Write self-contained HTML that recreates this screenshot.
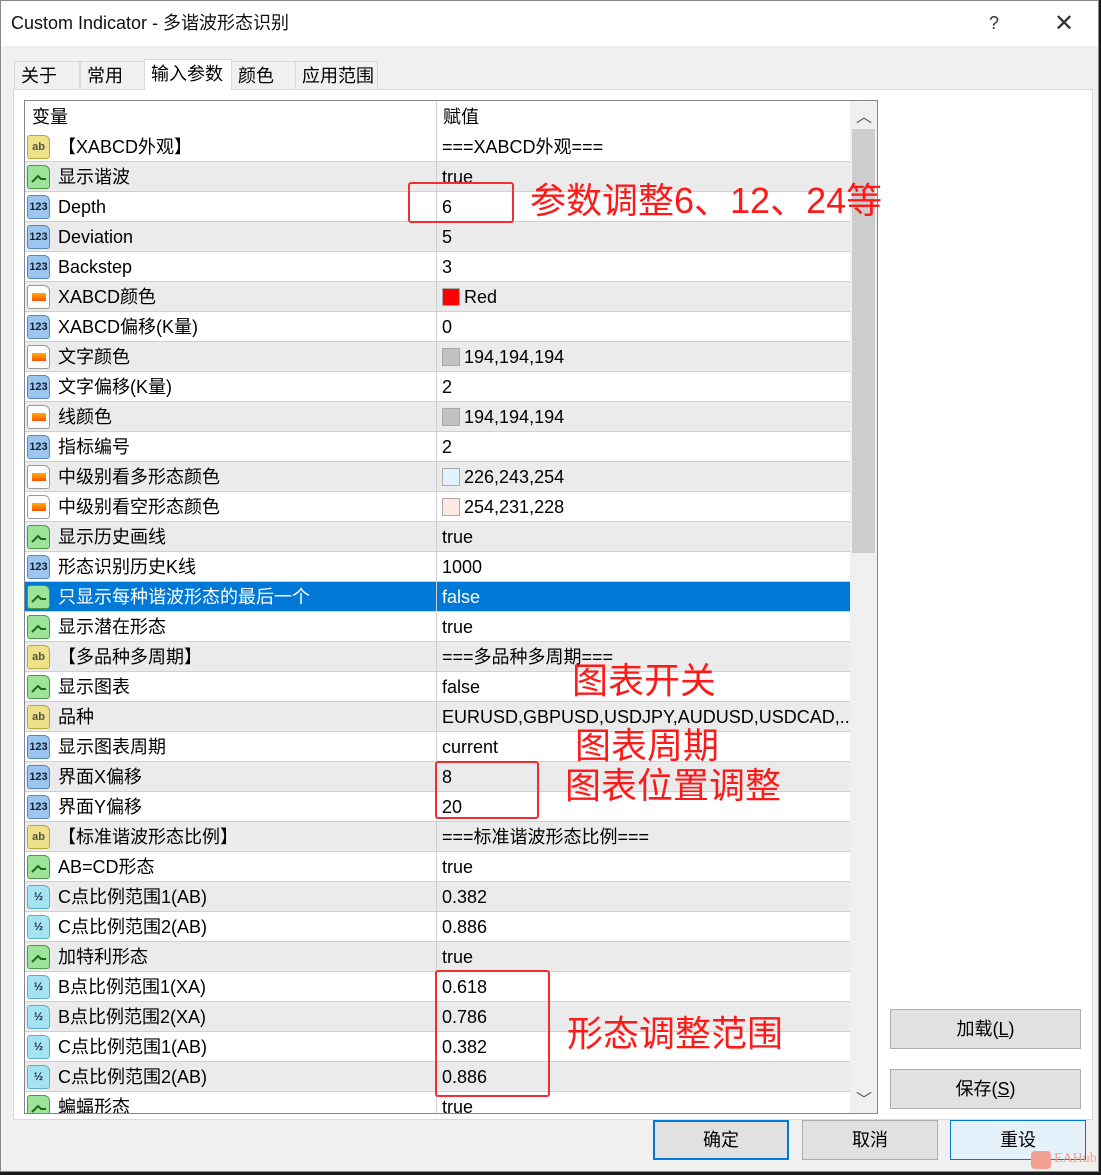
<!DOCTYPE html>
<html><head><meta charset="utf-8"><style>
*{margin:0;padding:0;box-sizing:border-box}
body{width:1101px;height:1175px;position:relative;background:#1a1a1a;font-family:"Liberation Sans","Noto Sans CJK SC",sans-serif;overflow:hidden}
.win{position:absolute;left:0;top:0;width:1099px;height:1172px;background:#f0f0f0;border:1px solid #888}
.title{position:absolute;left:0;top:0;width:1097px;height:45px;background:#fff;font-size:18px;color:#111;line-height:45px;padding-left:10px}
.tab{position:absolute;top:60px;height:29px;background:#f0f0f0;border:1px solid #d9d9d9;border-bottom:none;font-size:18px;line-height:28px;padding-left:6px;color:#000}
.panel{position:absolute;left:12px;top:88px;width:1080px;height:1031px;background:#fff;border:1px solid #d9d9d9}
.list{position:absolute;left:23px;top:99px;width:854px;height:1014px;border:1px solid #828790;background:#fff;overflow:hidden}
.hdr{position:absolute;left:0;top:0;width:825px;height:31px;background:#fff;font-size:18px;line-height:32px}
.row{position:absolute;left:0;width:825px;height:30px;border-bottom:1px solid #d0d0d0;font-size:18px;line-height:30px;color:#000}
.g{background:#ebebeb}
.sel{background:#0078d7;color:#fff}
.n{position:absolute;left:33px;top:0;white-space:nowrap}
.v{position:absolute;left:417px;top:0;white-space:nowrap}
.col{position:absolute;left:411px;top:0;width:1px;height:1014px;background:#d0d0d0}
.ic{position:absolute;left:2px;top:3px;width:23px;height:24px;border-radius:3px 6px 3px 3px;font-size:11px;font-weight:bold;font-style:normal;line-height:22px;text-align:center;overflow:hidden}
.ab{background:#efe08a;border:1px solid #b8a840;color:#554}
.b{background:#9de39a;border:1px solid #4a9a4a}
.b svg{position:absolute;left:2px;top:3px}
.nm{background:#9cc5ef;border:1px solid #5a86b8;color:#123}
.c{background:#fff;border:1px solid #999}
.c:after{content:"";position:absolute;left:4px;top:7px;width:14px;height:8px;background:linear-gradient(#ffb000,#ff5000)}
.d{background:#a6e3f2;border:1px solid #5ab0c8;color:#124}
.sw{display:inline-block;width:18px;height:18px;vertical-align:-3px;margin-right:4px;border:1px solid #aaa}
.sb{position:absolute;left:825px;top:0;width:27px;height:1012px;background:#f0f0f0}
.thumb{position:absolute;left:2px;top:28px;width:23px;height:424px;background:#cdcdcd}
.btn{position:absolute;height:40px;background:#e1e1e1;border:1px solid #adadad;font-size:18px;text-align:center;line-height:38px;color:#000}
.red{position:absolute;border:2px solid #f03030;border-radius:3px}
.ann{position:absolute;color:#ff1a1a;font-size:36px;white-space:nowrap;line-height:40px}
</style></head><body>
<div class="win">
<div class="title">Custom Indicator - 多谐波形态识别<span style="position:absolute;left:988px;color:#333">?</span><span style="position:absolute;left:1053px;font-size:24px;color:#333">✕</span></div>
<div class="tab" style="left:13px;width:66px">关于</div>
<div class="tab" style="left:79px;width:65px">常用</div>
<div class="tab" style="left:143px;width:88px;top:58px;height:31px;background:#fff;z-index:2">输入参数</div>
<div class="tab" style="left:230px;width:65px">颜色</div>
<div class="tab" style="left:294px;width:83px">应用范围</div>
<div class="panel"></div>
<div class="list">
<div class="hdr"><span style="position:absolute;left:7px">变量</span><span style="position:absolute;left:418px">赋值</span></div>
<div class="row" style="top:31px"><i class="ic ab">ab</i><span class="n">【XABCD外观】</span><span class="v">===XABCD外观===</span></div>
<div class="row g" style="top:61px"><i class="ic b"><svg width="18" height="16"><path d="M2 13 L8 7 L11 10 L16 10" stroke="#1a6a1a" stroke-width="2" fill="none"/></svg></i><span class="n">显示谐波</span><span class="v">true</span></div>
<div class="row" style="top:91px"><i class="ic nm">123</i><span class="n">Depth</span><span class="v">6</span></div>
<div class="row g" style="top:121px"><i class="ic nm">123</i><span class="n">Deviation</span><span class="v">5</span></div>
<div class="row" style="top:151px"><i class="ic nm">123</i><span class="n">Backstep</span><span class="v">3</span></div>
<div class="row g" style="top:181px"><i class="ic c"></i><span class="n">XABCD颜色</span><span class="v"><span class="sw" style="background:#f00"></span>Red</span></div>
<div class="row" style="top:211px"><i class="ic nm">123</i><span class="n">XABCD偏移(K量)</span><span class="v">0</span></div>
<div class="row g" style="top:241px"><i class="ic c"></i><span class="n">文字颜色</span><span class="v"><span class="sw" style="background:#c2c2c2"></span>194,194,194</span></div>
<div class="row" style="top:271px"><i class="ic nm">123</i><span class="n">文字偏移(K量)</span><span class="v">2</span></div>
<div class="row g" style="top:301px"><i class="ic c"></i><span class="n">线颜色</span><span class="v"><span class="sw" style="background:#c2c2c2"></span>194,194,194</span></div>
<div class="row" style="top:331px"><i class="ic nm">123</i><span class="n">指标编号</span><span class="v">2</span></div>
<div class="row g" style="top:361px"><i class="ic c"></i><span class="n">中级别看多形态颜色</span><span class="v"><span class="sw" style="background:#e2f3fe"></span>226,243,254</span></div>
<div class="row" style="top:391px"><i class="ic c"></i><span class="n">中级别看空形态颜色</span><span class="v"><span class="sw" style="background:#fee7e4"></span>254,231,228</span></div>
<div class="row g" style="top:421px"><i class="ic b"><svg width="18" height="16"><path d="M2 13 L8 7 L11 10 L16 10" stroke="#1a6a1a" stroke-width="2" fill="none"/></svg></i><span class="n">显示历史画线</span><span class="v">true</span></div>
<div class="row" style="top:451px"><i class="ic nm">123</i><span class="n">形态识别历史K线</span><span class="v">1000</span></div>
<div class="row sel" style="top:481px"><i class="ic b"><svg width="18" height="16"><path d="M2 13 L8 7 L11 10 L16 10" stroke="#1a6a1a" stroke-width="2" fill="none"/></svg></i><span class="n">只显示每种谐波形态的最后一个</span><span class="v">false</span></div>
<div class="row" style="top:511px"><i class="ic b"><svg width="18" height="16"><path d="M2 13 L8 7 L11 10 L16 10" stroke="#1a6a1a" stroke-width="2" fill="none"/></svg></i><span class="n">显示潜在形态</span><span class="v">true</span></div>
<div class="row g" style="top:541px"><i class="ic ab">ab</i><span class="n">【多品种多周期】</span><span class="v">===多品种多周期===</span></div>
<div class="row" style="top:571px"><i class="ic b"><svg width="18" height="16"><path d="M2 13 L8 7 L11 10 L16 10" stroke="#1a6a1a" stroke-width="2" fill="none"/></svg></i><span class="n">显示图表</span><span class="v">false</span></div>
<div class="row g" style="top:601px"><i class="ic ab">ab</i><span class="n">品种</span><span class="v">EURUSD,GBPUSD,USDJPY,AUDUSD,USDCAD,...</span></div>
<div class="row" style="top:631px"><i class="ic nm">123</i><span class="n">显示图表周期</span><span class="v">current</span></div>
<div class="row g" style="top:661px"><i class="ic nm">123</i><span class="n">界面X偏移</span><span class="v">8</span></div>
<div class="row" style="top:691px"><i class="ic nm">123</i><span class="n">界面Y偏移</span><span class="v">20</span></div>
<div class="row g" style="top:721px"><i class="ic ab">ab</i><span class="n">【标准谐波形态比例】</span><span class="v">===标准谐波形态比例===</span></div>
<div class="row" style="top:751px"><i class="ic b"><svg width="18" height="16"><path d="M2 13 L8 7 L11 10 L16 10" stroke="#1a6a1a" stroke-width="2" fill="none"/></svg></i><span class="n">AB=CD形态</span><span class="v">true</span></div>
<div class="row g" style="top:781px"><i class="ic d">½</i><span class="n">C点比例范围1(AB)</span><span class="v">0.382</span></div>
<div class="row" style="top:811px"><i class="ic d">½</i><span class="n">C点比例范围2(AB)</span><span class="v">0.886</span></div>
<div class="row g" style="top:841px"><i class="ic b"><svg width="18" height="16"><path d="M2 13 L8 7 L11 10 L16 10" stroke="#1a6a1a" stroke-width="2" fill="none"/></svg></i><span class="n">加特利形态</span><span class="v">true</span></div>
<div class="row" style="top:871px"><i class="ic d">½</i><span class="n">B点比例范围1(XA)</span><span class="v">0.618</span></div>
<div class="row g" style="top:901px"><i class="ic d">½</i><span class="n">B点比例范围2(XA)</span><span class="v">0.786</span></div>
<div class="row" style="top:931px"><i class="ic d">½</i><span class="n">C点比例范围1(AB)</span><span class="v">0.382</span></div>
<div class="row g" style="top:961px"><i class="ic d">½</i><span class="n">C点比例范围2(AB)</span><span class="v">0.886</span></div>
<div class="row" style="top:991px"><i class="ic b"><svg width="18" height="16"><path d="M2 13 L8 7 L11 10 L16 10" stroke="#1a6a1a" stroke-width="2" fill="none"/></svg></i><span class="n">蝙蝠形态</span><span class="v">true</span></div>
<div class="col"></div>
<div class="sb"><div class="thumb"></div><span style="position:absolute;left:6px;top:2px;font-size:16px;color:#555">︿</span><span style="position:absolute;left:6px;top:985px;font-size:16px;color:#555">﹀</span></div>
</div>
<div class="btn" style="left:889px;top:1008px;width:191px">加载(<u>L</u>)</div>
<div class="btn" style="left:889px;top:1068px;width:191px">保存(<u>S</u>)</div>
<div class="btn" style="left:652px;top:1119px;width:136px;border:2px solid #0078d7;line-height:36px">确定</div>
<div class="btn" style="left:801px;top:1119px;width:136px">取消</div>
<div class="btn" style="left:949px;top:1119px;width:136px;background:#e5f1fb;border-color:#0078d7">重设</div>
<div class="red" style="left:407px;top:181px;width:106px;height:41px"></div>
<div class="ann" style="left:529px;top:180px">参数调整6、12、24等</div>
<div class="ann" style="left:571px;top:660px">图表开关</div>
<div class="ann" style="left:574px;top:725px">图表周期</div>
<div class="red" style="left:434px;top:760px;width:104px;height:58px"></div>
<div class="ann" style="left:564px;top:765px">图表位置调整</div>
<div class="red" style="left:434px;top:969px;width:115px;height:127px"></div>
<div class="ann" style="left:566px;top:1013px">形态调整范围</div>
<div style="position:absolute;left:1030px;top:1150px;width:20px;height:18px;background:#f4a090;border-radius:4px"></div>
<div style="position:absolute;left:1053px;top:1150px;font-size:14px;color:#f4a090;font-family:'Liberation Serif',serif">EAHub</div>
</div>
</body></html>
